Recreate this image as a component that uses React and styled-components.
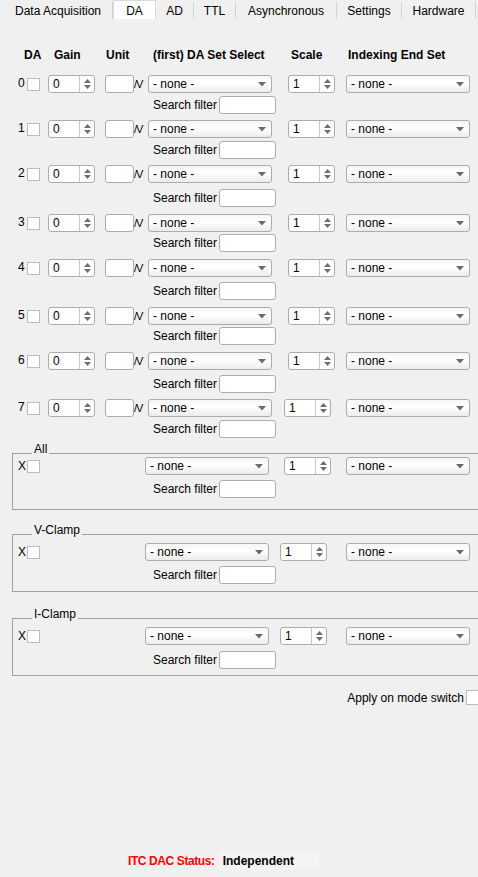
import React from 'react';
import styled, { createGlobalStyle } from 'styled-components';

const GlobalStyle = createGlobalStyle`
  html, body {
    margin: 0;
    padding: 0;
    background: #f0f0f0;
    overflow: hidden;
  }
  body {
    font-family: "Liberation Sans", Arial, sans-serif;
    font-size: 12px;
    color: #000;
  }
`;

const Panel = styled.div`
  width: 478px;
  height: 877px;
  display: flex;
  flex-direction: column;
  background: #f0f0f0;
  overflow: hidden;
`;

const TabBar = styled.div`
  display: flex;
  height: 21px;
  padding-left: 4px;
  align-items: flex-start;
`;

const Tab = styled.div`
  width: ${(p) => p.$w}px;
  height: ${(p) => (p.$active ? 19 : 17)}px;
  text-align: center;
  box-sizing: border-box;
  background: ${(p) => (p.$active ? '#fff' : 'transparent')};
  border-right: 1px solid ${(p) => (p.$active ? '#d9d9d9' : '#d4d4d4')};
  border-left: ${(p) => (p.$active ? '1px solid #d9d9d9' : 'none')};
  border-top: ${(p) => (p.$active ? '1px solid #d9d9d9' : 'none')};
  margin-top: ${(p) => (p.$active ? 0 : 2)}px;
  line-height: ${(p) => (p.$active ? 21 : 18)}px;
  white-space: nowrap;
`;

const HeaderRow = styled.div`
  display: flex;
  margin-top: 27px;
  padding-left: 24px;
  height: 14px;
  line-height: 14px;
  font-weight: bold;
`;

const HeaderCell = styled.div`
  width: ${(p) => p.$w}px;
  flex: none;
  white-space: nowrap;
`;

const ChannelBlock = styled.div`
  margin-top: ${(p) => p.$top}px;
`;

const ControlRow = styled.div`
  display: flex;
  align-items: center;
  height: 18px;
  padding-left: ${(p) => p.$pl || 18}px;
`;

const IndexLabel = styled.div`
  width: 9px;
  flex: none;
  align-self: flex-start;
  line-height: 13px;
  margin-top: 2px;
`;

const Check = styled.div`
  width: 13px;
  height: 13px;
  flex: none;
  box-sizing: border-box;
  background: #fff;
  border: 1px solid #bcbcbc;
`;

const SpinBox = styled.div`
  display: flex;
  width: 47px;
  height: 18px;
  flex: none;
  margin-left: ${(p) => p.$ml}px;
  box-sizing: border-box;
  background: #fff;
  border: 1px solid #acacac;
  border-radius: 3px;
`;

const SpinValue = styled.div`
  flex: 1;
  padding-left: 4px;
  line-height: 16px;
`;

const SpinArrows = styled.div`
  width: 14px;
  border-left: 1px solid #c8c8c8;
  display: flex;
  align-items: center;
  justify-content: center;
`;

const TextBox = styled.div`
  width: ${(p) => p.$w}px;
  height: 18px;
  flex: none;
  margin-left: ${(p) => p.$ml || 0}px;
  box-sizing: border-box;
  background: #fff;
  border: 1px solid #acacac;
  border-radius: 3px;
`;

const UnitSuffix = styled.span`
  width: 14px;
  flex: none;
  font-size: 11px;
  line-height: 18px;
  letter-spacing: -1px;
`;

const Select = styled.div`
  display: flex;
  align-items: center;
  justify-content: space-between;
  width: 124px;
  height: 18px;
  flex: none;
  margin-left: ${(p) => p.$ml || 0}px;
  box-sizing: border-box;
  padding: 0 5px 0 4px;
  border: 1px solid #acacac;
  border-radius: 3px;
  background: linear-gradient(#f6f6f6, #ffffff 45%, #ebebeb);
`;

const SearchLine = styled.div`
  display: flex;
  align-items: center;
  height: 18px;
  margin-top: ${(p) => p.$top}px;
  padding-left: ${(p) => p.$pl}px;
`;

const SearchLabel = styled.span`
  width: 66px;
  flex: none;
  white-space: nowrap;
`;

const Group = styled.div`
  position: relative;
  margin-top: ${(p) => p.$top}px;
  margin-left: 12px;
  margin-right: -20px;
  border: 1px solid #a0a0a0;
  padding: ${(p) => p.$pt}px 0 ${(p) => p.$pb}px 0;
`;

const Legend = styled.span`
  position: absolute;
  top: -12px;
  left: 19px;
  padding: 0 2px;
  line-height: 14px;
  background: #f0f0f0;
`;

const XLabel = styled.div`
  width: 9px;
  flex: none;
  line-height: 13px;
  margin-top: ${(p) => p.$dy || 0}px;
`;

const ApplyLine = styled.div`
  display: flex;
  justify-content: flex-end;
  align-items: center;
  margin-top: 14px;
  margin-right: -2px;
  gap: 2px;
`;

const ApplyCheck = styled(Check)`
  width: 14px;
  height: 15px;
`;

const StatusBar = styled.div`
  margin-top: auto;
  margin-bottom: 7px;
  display: flex;
  align-items: center;
  padding-left: 128px;
  height: 18px;
`;

const StatusLabel = styled.span`
  color: #ff0000;
  font-weight: bold;
  letter-spacing: -0.4px;
  margin-right: 4px;
  flex: none;
  white-space: nowrap;
`;

const StatusValue = styled.div`
  width: 100px;
  height: 18px;
  line-height: 18px;
  padding-left: 4px;
  box-sizing: border-box;
  background: #f4f4f4;
  font-weight: bold;
`;

const Arrows = () => (
  <svg width="9" height="12" viewBox="0 0 9 12">
    <path d="M4.5 1 L8 5 L1 5 Z" fill="#6e6e6e" />
    <path d="M4.5 11 L8 7 L1 7 Z" fill="#6e6e6e" />
  </svg>
);

const Caret = () => (
  <svg width="8" height="5" viewBox="0 0 8 5">
    <path d="M0 0 L8 0 L4 4.5 Z" fill="#6a6a6a" />
  </svg>
);

function Spin({ value, ml }) {
  return (
    <SpinBox $ml={ml}>
      <SpinValue>{value}</SpinValue>
      <SpinArrows>
        <Arrows />
      </SpinArrows>
    </SpinBox>
  );
}

function NoneSelect({ ml }) {
  return (
    <Select $ml={ml}>
      <span>- none -</span>
      <Caret />
    </Select>
  );
}

function Search({ top, pl = 153 }) {
  return (
    <SearchLine $top={top} $pl={pl}>
      <SearchLabel>Search filter</SearchLabel>
      <TextBox $w={57} />
    </SearchLine>
  );
}

const tabs = [
  ['Data Acquisition', 109],
  ['DA', 43],
  ['AD', 38],
  ['TTL', 42],
  ['Asynchronous', 101],
  ['Settings', 65],
  ['Hardware', 74],
];

// [gap above row, gap between row and its search filter, scale offset]
const channels = [
  [13, 3, 16],
  [6, 3, 16],
  [6, 6, 16],
  [7, 2, 16],
  [7, 5, 16],
  [7, 2, 16],
  [7, 5, 16],
  [6, 3, 12],
];

const groups = [
  { name: 'All', top: 15, pt: 3, pb: 11, scaleMl: 15, searchTop: 5 },
  { name: 'V-Clamp', top: 24, pt: 8, pb: 7, scaleMl: 11, searchTop: 5 },
  { name: 'I-Clamp', top: 26, pt: 8, pb: 6, scaleMl: 11, searchTop: 6 },
];

export default function App() {
  return (
    <Panel>
      <GlobalStyle />
      <TabBar>
        {tabs.map(([t, w]) => (
          <Tab key={t} $w={w} $active={t === 'DA'}>
            {t}
          </Tab>
        ))}
      </TabBar>

      <HeaderRow>
        <HeaderCell $w={30}>DA</HeaderCell>
        <HeaderCell $w={52}>Gain</HeaderCell>
        <HeaderCell $w={47}>Unit</HeaderCell>
        <HeaderCell $w={138}>(first) DA Set Select</HeaderCell>
        <HeaderCell $w={57}>Scale</HeaderCell>
        <HeaderCell $w={110}>Indexing End Set</HeaderCell>
      </HeaderRow>

      {channels.map(([top, searchTop, scaleMl], i) => (
        <ChannelBlock key={i} $top={top}>
          <ControlRow>
            <IndexLabel>{i}</IndexLabel>
            <Check />
            <Spin value="0" ml={8} />
            <TextBox $w={29} $ml={10} />
            <UnitSuffix>/V</UnitSuffix>
            <NoneSelect ml={0} />
            <Spin value="1" ml={scaleMl} />
            <NoneSelect ml={346 - 288 - 47 + (16 - scaleMl)} />
          </ControlRow>
          <Search top={searchTop} />
        </ChannelBlock>
      ))}

      {groups.map((g) => (
        <Group key={g.name} $top={g.top} $pt={g.pt} $pb={g.pb}>
          <Legend>{g.name}</Legend>
          <ControlRow $pl={5}>
            <XLabel $dy={1}>X</XLabel>
            <Check />
            <NoneSelect ml={105} />
            <Spin value="1" ml={g.scaleMl} />
            <NoneSelect ml={346 - 269 - 47 - g.scaleMl} />
          </ControlRow>
          <Search top={g.searchTop} pl={140} />
        </Group>
      ))}

      <ApplyLine>
        <span>Apply on mode switch</span>
        <ApplyCheck />
      </ApplyLine>

      <StatusBar>
        <StatusLabel>ITC DAC Status:</StatusLabel>
        <StatusValue>Independent</StatusValue>
      </StatusBar>
    </Panel>
  );
}
